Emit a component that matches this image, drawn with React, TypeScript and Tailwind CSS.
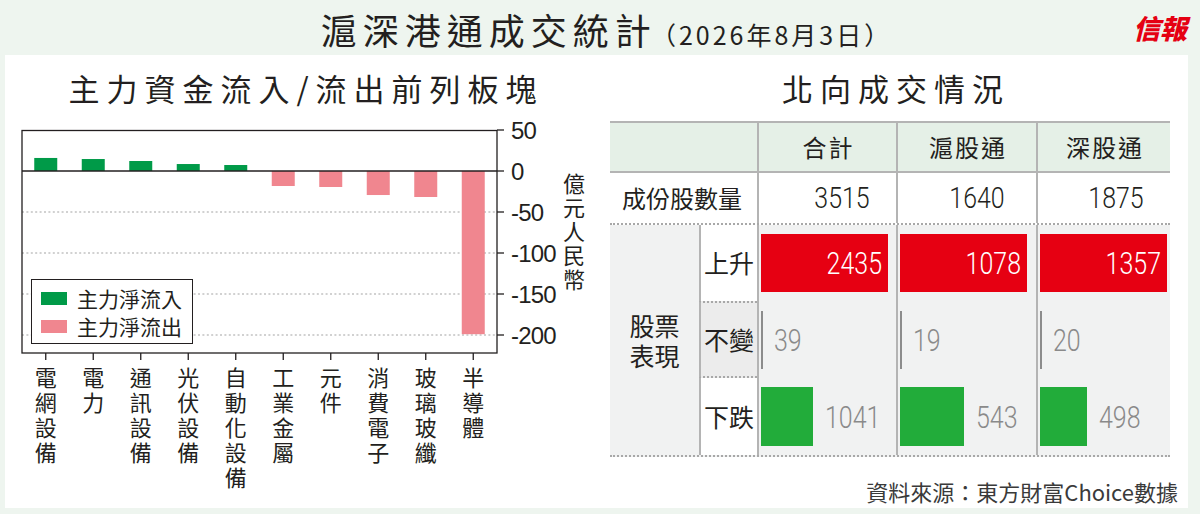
import React from 'react'

// 主力資金流入/流出前列板塊 (億元人民幣)
const sectors = [
  { name: '電網設備', v: 15.9 },
  { name: '電力', v: 14.6 },
  { name: '通訊設備', v: 12.2 },
  { name: '光伏設備', v: 8.5 },
  { name: '自動化設備', v: 7.3 },
  { name: '工業金屬', v: -18.3 },
  { name: '元件', v: -19.5 },
  { name: '消費電子', v: -29.3 },
  { name: '玻璃玻纖', v: -31.7 },
  { name: '半導體', v: -199 },
]

// 北向成交情況
const channels = [
  { name: '合計', total: 3515, up: 2435, flat: 39, down: 1041, w: 'w-[139px]', pr: 'pr-[26px]' },
  { name: '滬股通', total: 1640, up: 1078, flat: 19, down: 543, w: 'w-[140px]', pr: 'pr-[31px]' },
  { name: '深股通', total: 1875, up: 1357, flat: 20, down: 498, w: 'w-[134px]', pr: 'pr-[26px]' },
]

const ZERO = 171
const K = 0.82
const PLOT_L = 22
const PLOT_R = 497
const PLOT_T = 130.5
const PLOT_B = 353
const SLOT = 47.5
const BAR_W = 23
const UP_BAR = 127
const INK = '#231f20'

const yOf = (v: number) => ZERO - v * K

function FlowChart() {
  const ticks = [50, 0, -50, -100, -150, -200]
  return (
    <svg width={560} height={249} viewBox="5 115 560 249" className="block shrink-0">
      {/* grid */}
      {[-50, -100, -150, -200].map((t) => (
        <line key={t} x1={PLOT_L} x2={PLOT_R} y1={yOf(t)} y2={yOf(t)} stroke="#a3a3a3" strokeWidth={1} strokeDasharray="2 2.4" />
      ))}
      {/* bars */}
      {sectors.map((s, i) => {
        const cx = PLOT_L + SLOT * (i + 0.5)
        const h = Math.abs(s.v) * K
        return s.v >= 0 ? (
          <rect key={s.name} x={cx - BAR_W / 2} y={ZERO - h} width={BAR_W} height={h} fill="#009a48" />
        ) : (
          <rect key={s.name} x={cx - BAR_W / 2} y={ZERO} width={BAR_W} height={h} fill="#f0868f" />
        )
      })}
      {/* frame */}
      <rect x={PLOT_L} y={PLOT_T} width={PLOT_R - PLOT_L} height={PLOT_B - PLOT_T} fill="none" stroke={INK} strokeWidth={1.3} />
      <line x1={PLOT_L} x2={PLOT_R} y1={ZERO} y2={ZERO} stroke={INK} strokeWidth={1.3} />
      {/* right axis */}
      {ticks.map((t) => (
        <g key={t}>
          <line x1={PLOT_R} x2={PLOT_R + 7} y1={yOf(t)} y2={yOf(t)} stroke={INK} strokeWidth={1.3} />
          <text
            x={511}
            y={yOf(t) + 9}
            fontSize={24}
            letterSpacing={-0.8}
            fill={INK}
            fontFamily="'Liberation Sans', Arial, sans-serif"
          >
            {t}
          </text>
        </g>
      ))}
      {/* category ticks */}
      {sectors.map((s, i) => {
        const cx = PLOT_L + SLOT * (i + 0.5)
        return <line key={s.name} x1={cx} x2={cx} y1={PLOT_B} y2={PLOT_B + 7} stroke={INK} strokeWidth={1.3} />
      })}
    </svg>
  )
}

function Num({ children, className }: { children: React.ReactNode; className: string }) {
  return (
    <span className={`inline-block font-['Roboto',sans-serif] font-light leading-none ${className}`}>
      {children}
    </span>
  )
}

export default function App() {
  return (
    <div className="w-[1200px] h-[514px] bg-[#eef5ef] flex flex-col font-['Noto_Sans_CJK_TC','Noto_Sans',sans-serif] text-[#231f20]">
      {/* Header */}
      <header className="relative h-[55px] shrink-0 flex items-center justify-center pl-[13px] pt-[2px]">
        <div className="flex items-baseline">
          <span className="text-[36px] leading-none tracking-[6px]">滬深港通成交統計</span>
          <span className="text-[25px] leading-none tracking-[3px] ml-[-6px]">（2026年8月3日）</span>
        </div>
        <div className="absolute right-[13px] top-0 h-full flex items-center">
          <span className="text-[27px] leading-none font-black text-[#e50012] italic">信報</span>
        </div>
      </header>

      {/* Panel */}
      <main className="ml-[5px] w-[1183px] h-[453px] bg-white flex">
        {/* Left: sector money flow */}
        <section className="w-[595px] shrink-0 flex flex-col">
          <h2 className="h-[60px] pt-[4px] flex items-center justify-center pl-[7px] text-[31px] leading-none tracking-[7px] font-normal">
            主力資金流入/流出前列板塊
          </h2>
          <div className="relative flex">
            <FlowChart />
            <div className="pt-[55px] ml-[-2px] flex flex-col items-center text-[22px]">
              {'億元人民幣'.split('').map((c, i) => (
                <span key={i} className="h-[24px] leading-[24px]">{c}</span>
              ))}
            </div>
            {/* legend */}
            <div className="absolute left-[26px] top-[164px] w-[162px] h-[65px] bg-white border-[1.5px] border-[#231f20] pt-[4px] pl-[9px]">
              <div className="h-[28px] flex items-center gap-[10px]">
                <span className="w-[26px] h-[13px] bg-[#009a48]" />
                <span className="text-[21px] leading-none">主力淨流入</span>
              </div>
              <div className="h-[28px] flex items-center gap-[10px]">
                <span className="w-[26px] h-[13px] bg-[#f0868f]" />
                <span className="text-[21px] leading-none">主力淨流出</span>
              </div>
            </div>
          </div>
          <div className="flex pl-[17px]">
            {sectors.map((s) => (
              <div key={s.name} className="w-[47.5px] flex flex-col items-center text-[22px]">
                {s.name.split('').map((c, i) => (
                  <span key={i} className="h-[25px] leading-[25px]">{c}</span>
                ))}
              </div>
            ))}
          </div>
        </section>

        {/* Right: northbound turnover */}
        <section className="flex-1 flex flex-col">
          <h2 className="h-[66px] flex items-center justify-center pl-[4px] pb-[2px] text-[31px] leading-none tracking-[7px] font-normal">
            北向成交情況
          </h2>
          <div className="ml-[10px] w-[560px]">
            {/* header row */}
            <div className="flex h-[52px] bg-[#e5f0e7] border-y-2 border-[#b4b4b4]">
              <div className="w-[147px]" />
              {channels.map((c) => (
                <div key={c.name} className={`${c.w} border-l-2 border-[#b4b4b4] flex items-center justify-center text-[24px] tracking-[2px] pl-[2px]`}>
                  {c.name}
                </div>
              ))}
            </div>
            {/* constituent count */}
            <div className="flex h-[52px] border-b-2 border-dotted border-[#a8a8a8]">
              <div className="w-[147px] flex items-center pl-[12px] text-[24px]">成份股數量</div>
              {channels.map((c) => (
                <div key={c.name} className={`${c.w} ${c.pr} border-l-2 border-solid border-[#b4b4b4] flex items-center justify-end`}>
                  <Num className="text-[30px] scale-x-[0.83] origin-right">{c.total}</Num>
                </div>
              ))}
            </div>
            {/* performance */}
            <div className="grid grid-cols-[89px_58px_139px_140px_134px] grid-rows-[76px_77px_77px] bg-[#f1f2f2] border-b-2 border-dotted border-[#a8a8a8]">
              <div className="row-span-3 flex flex-col items-center justify-center text-[25px] leading-[30px]">
                <span>股票</span>
                <span>表現</span>
              </div>
              {/* up */}
              <div className="border-l-2 border-[#b4b4b4] bg-white flex items-center justify-center text-[25px]">上升</div>
              {channels.map((c) => (
                <div key={c.name} className="border-l-2 border-[#b4b4b4] flex items-center pl-[2px]">
                  <div className="w-[127px] h-[58px] bg-[#e60012] flex items-center justify-end pr-[6px] text-white">
                    <Num className="text-[32px] scale-x-[0.78] origin-right">{c.up}</Num>
                  </div>
                </div>
              ))}
              {/* flat */}
              <div className="border-l-2 border-l-[#b4b4b4] border-y-2 border-y-[#a8a8a8] border-dotted [border-left-style:solid] bg-[#ececec] flex items-center justify-center text-[25px]">
                不變
              </div>
              {channels.map((c) => (
                <div key={c.name} className="border-l-2 border-[#b4b4b4] flex items-center pl-[2px]">
                  <span className="w-[2px] h-[58px] bg-[#8c8c8c]" />
                  <Num className="ml-[11px] text-[32px] scale-x-[0.78] origin-left text-[#8a8a8a]">{c.flat}</Num>
                </div>
              ))}
              {/* down */}
              <div className="border-l-2 border-[#b4b4b4] bg-white flex items-center justify-center text-[25px]">下跌</div>
              {channels.map((c) => (
                <div key={c.name} className="border-l-2 border-[#b4b4b4] flex items-center pl-[2px] gap-[12px]">
                  <span className="h-[59px] bg-[#22ac3a]" style={{ width: `${(c.down / c.up) * UP_BAR}px` }} />
                  <Num className="text-[32px] scale-x-[0.78] origin-left text-[#8a8a8a]">{c.down}</Num>
                </div>
              ))}
            </div>
          </div>
          <div className="mt-[20px] pr-[10px] text-right text-[22px] leading-[28px] text-[#3a3a3a]">
            資料來源：東方財富Choice數據
          </div>
        </section>
      </main>
    </div>
  )
}
